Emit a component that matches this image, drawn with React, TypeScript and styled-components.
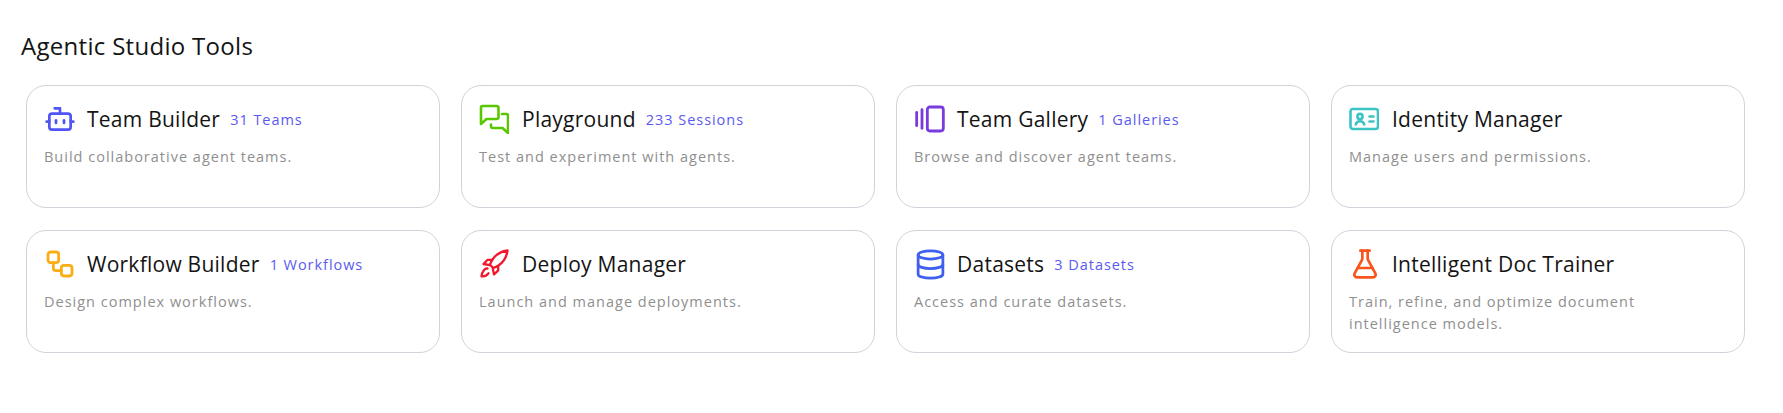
import React from "react";
import styled, { createGlobalStyle } from "styled-components";
import { Bot, GalleryHorizontalEnd, Workflow, Database, FlaskConical } from "lucide-react";

const Global = createGlobalStyle`
  html, body { margin: 0; padding: 0; background: #fff; }
  body { font-family: "Open Sans", "Noto Sans", "Liberation Sans", sans-serif; }
`;

const Page = styled.div`
  padding: 30px 38px 50px 21px;
`;

const Heading = styled.h2`
  margin: 0 0 24px;
  font-size: 24px;
  line-height: 31px;
  font-weight: 400;
  letter-spacing: 0.3px;
  color: #141414;
`;

const Grid = styled.div`
  display: grid;
  grid-template-columns: repeat(4, 1fr);
  gap: 22px 21px;
  margin-left: 5px;
`;

const Card = styled.div`
  box-sizing: border-box;
  height: 123px;
  padding: 17px 17px 0;
  background: #fff;
  border: 1px solid #d2d2da;
  border-radius: 20px;
`;

const Header = styled.div`
  display: flex;
  align-items: center;
  height: 32px;
  margin-bottom: 11px;
`;

const IconBox = styled.span<{ $color: string }>`
  display: flex;
  align-items: center;
  justify-content: flex-start;
  flex: none;
  width: 30px;
  height: 30px;
  margin-right: 13px;
  color: ${(p) => p.$color};

  svg {
    flex: none;
  }
`;

const Title = styled.span`
  font-size: 21px;
  line-height: 28px;
  letter-spacing: 0.25px;
  color: #141414;
`;

const Count = styled.span`
  margin-left: 10px;
  font-size: 14.5px;
  letter-spacing: 0.95px;
  color: #5a5af0;
`;

const Desc = styled.p`
  margin: 0;
  max-width: 320px;
  font-size: 14.5px;
  line-height: 22px;
  letter-spacing: 1px;
  color: #8f8f8f;
`;

const ChatIcon = () => (
  <svg width="30" height="30" viewBox="0 0 30 30" fill="none" stroke="currentColor" strokeWidth="2.6" strokeLinecap="round" strokeLinejoin="round">
    <path d="M3.5 2h14a2 2 0 0 1 2 2v9a2 2 0 0 1-2 2H7.5L2 20V3.5A1.5 1.5 0 0 1 3.5 2z" />
    <path d="M23 10h4.5a1.5 1.5 0 0 1 1.5 1.5V29l-5.5-5H14a2 2 0 0 1-2-2v-1.5" />
  </svg>
);

const IdentityIcon = () => (
  <svg width="30" height="30" viewBox="0 0 30 30" fill="none" stroke="currentColor" strokeWidth="2.6" strokeLinecap="round" strokeLinejoin="round">
    <rect x="1.5" y="5" width="27.5" height="20" rx="2.5" />
    <circle cx="11" cy="12.5" r="2.6" />
    <path d="M6.8 20.5c.6-2.2 2.2-3.2 4.2-3.2s3.6 1 4.2 3.2" />
    <path d="M20.5 12.5h4M20.5 17.5h4" />
  </svg>
);

const RocketIcon = () => (
  <svg width="30" height="30" viewBox="0 0 30 30" fill="none" stroke="currentColor" strokeWidth="2.3" strokeLinecap="round" strokeLinejoin="round">
    <path d="M28.5 1.5c-6 .8-11.5 3.8-15 9-1.2 1.8-2 3.6-2.5 5.3l3.2 3.2c1.8-.5 3.6-1.3 5.3-2.5 5.2-3.5 8.2-9 9-15z" />
    <path d="M12.8 10.8H8.6L4.5 15l6.3 1.2" />
    <path d="M19.2 17.2v4.2L15 25.5l-1.2-6.3" />
    <path d="M8.5 19.5c-2.5-.5-5.6 3-6 7.8 3.6.3 6-1.2 7-3" />
  </svg>
);

type Tool = { name: string; count?: string; desc: string; color: string; icon: React.ReactNode };

const tools: Tool[] = [
  { name: "Team Builder", count: "31 Teams", desc: "Build collaborative agent teams.", color: "#4f55f5", icon: <Bot size={32} strokeWidth={2} /> },
  { name: "Playground", count: "233 Sessions", desc: "Test and experiment with agents.", color: "#5ac800", icon: <ChatIcon /> },
  { name: "Team Gallery", count: "1 Galleries", desc: "Browse and discover agent teams.", color: "#7a3bdc", icon: <GalleryHorizontalEnd size={32} strokeWidth={2.1} /> },
  { name: "Identity Manager", desc: "Manage users and permissions.", color: "#3cc4c4", icon: <IdentityIcon /> },
  { name: "Workflow Builder", count: "1 Workflows", desc: "Design complex workflows.", color: "#faad14", icon: <Workflow size={32} strokeWidth={2.1} /> },
  { name: "Deploy Manager", desc: "Launch and manage deployments.", color: "#f0182d", icon: <RocketIcon /> },
  { name: "Datasets", count: "3 Datasets", desc: "Access and curate datasets.", color: "#3f5ff0", icon: <Database size={33} strokeWidth={2} /> },
  { name: "Intelligent Doc Trainer", desc: "Train, refine, and optimize document intelligence models.", color: "#fa541c", icon: <FlaskConical size={32} strokeWidth={2} /> },
];

export default function App() {
  return (
    <Page>
      <Global />
      <Heading>Agentic Studio Tools</Heading>
      <Grid>
        {tools.map((t) => (
          <Card key={t.name}>
            <Header>
              <IconBox $color={t.color}>{t.icon}</IconBox>
              <Title>{t.name}</Title>
              {t.count && <Count>{t.count}</Count>}
            </Header>
            <Desc>{t.desc}</Desc>
          </Card>
        ))}
      </Grid>
    </Page>
  );
}
